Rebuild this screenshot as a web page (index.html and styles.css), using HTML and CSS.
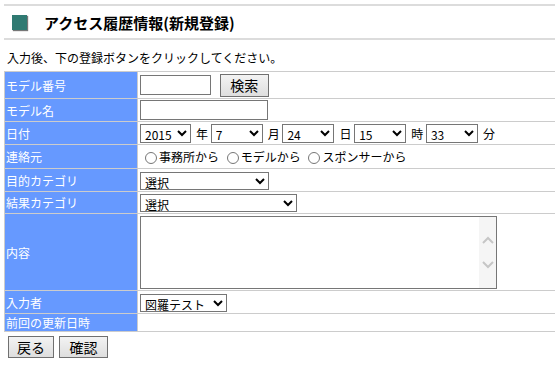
FILE: index.html
```html
<!DOCTYPE html>
<html lang="ja">
<head>
    <meta charset="UTF-8">
    <title>アクセス履歴情報(新規登録)</title>
    <link rel="stylesheet" href="styles.css">
</head>
<body>
    <div class="title-bar">
        <span class="title-mark"></span>
        <h1>アクセス履歴情報(新規登録)</h1>
    </div>
    <p class="guide">入力後、下の登録ボタンをクリックしてください。</p>

    <table class="form-table">
        <tr class="row-model-no">
            <th>モデル番号</th>
            <td>
                <input type="text" class="txt-code">
                <button type="button" class="btn btn-search">検索</button>
            </td>
        </tr>
        <tr class="row-model-name">
            <th>モデル名</th>
            <td><input type="text" class="txt-name"></td>
        </tr>
        <tr class="row-date">
            <th>日付</th>
            <td>
                <select class="sel-year"><option>2015</option></select><span class="unit">年</span>
                <select class="sel-num"><option>7</option></select><span class="unit">月</span>
                <select class="sel-num"><option>24</option></select><span class="unit">日</span>
                <select class="sel-num"><option>15</option></select><span class="unit">時</span>
                <select class="sel-num"><option>33</option></select><span class="unit">分</span>
            </td>
        </tr>
        <tr class="row-contact">
            <th>連絡元</th>
            <td>
                <label><input type="radio" name="from">事務所から</label>
                <label><input type="radio" name="from">モデルから</label>
                <label><input type="radio" name="from">スポンサーから</label>
            </td>
        </tr>
        <tr class="row-purpose">
            <th>目的カテゴリ</th>
            <td><select class="sel-purpose"><option>選択</option></select></td>
        </tr>
        <tr class="row-result">
            <th>結果カテゴリ</th>
            <td><select class="sel-result"><option>選択</option></select></td>
        </tr>
        <tr class="row-content">
            <th>内容</th>
            <td>
                <div class="memo">
                    <textarea></textarea>
                    <div class="memo-scroll">
                        <svg width="12" height="8" viewBox="0 0 12 8"><path d="M1 7 L6 2 L11 7" fill="none" stroke="#c6c6c6" stroke-width="2"/></svg>
                        <svg width="12" height="8" viewBox="0 0 12 8"><path d="M1 1 L6 6 L11 1" fill="none" stroke="#c6c6c6" stroke-width="2"/></svg>
                    </div>
                </div>
            </td>
        </tr>
        <tr class="row-user">
            <th>入力者</th>
            <td><select class="sel-user"><option>図羅テスト</option></select></td>
        </tr>
        <tr class="row-updated">
            <th>前回の更新日時</th>
            <td></td>
        </tr>
    </table>

    <div class="buttons">
        <button type="button" class="btn btn-back">戻る</button>
        <button type="button" class="btn btn-confirm">確認</button>
    </div>
</body>
</html>
```

FILE: styles.css
```css
body {
    margin: 4px 0 0 4px;
    font-family: "Noto Sans CJK JP", "Noto Sans", sans-serif;
    font-size: 12px;
    color: #000;
    background: #fff;
    overflow: hidden;
}

/* title */
.title-bar {
    display: flex;
    align-items: center;
    height: 32px;
    border-top: 2px solid #dcdcdc;
    border-bottom: 2px solid #dcdcdc;
    padding-left: 8px;
}

.title-mark {
    width: 15px;
    height: 15px;
    background-color: #2f7a72;
    box-shadow: 1px 1px 1px #777;
    margin-right: 17px;
}

h1 {
    margin: 0;
    font-size: 15px;
    font-weight: bold;
}

.guide {
    margin: 10px 0 5px 3px;
    line-height: 16px;
}

/* form table */
.form-table {
    width: calc(100% + 2px);
    border-spacing: 1px;
    background-color: #cccccc;
}

.form-table th {
    width: 131px;
    padding: 0 0 0 1px;
    background-color: #6699ff;
    color: #fff;
    font-weight: normal;
    text-align: left;
}

.form-table td {
    padding: 0 2px;
    background-color: #fff;
    white-space: nowrap;
}

.row-model-no td { height: 26px; }
.row-model-name td { height: 22px; }
.row-date td { height: 22px; }
.row-contact td { height: 23px; }
.row-purpose td { height: 22px; }
.row-result td { height: 21px; }
.row-content td { height: 76px; }
.row-user td { height: 22px; }
.row-updated td { height: 16px; }

input[type="text"] {
    box-sizing: border-box;
    height: 20px;
    margin: 0;
    padding: 1px 2px;
    border: 1px solid #767676;
    border-radius: 0;
    font: 13px "Noto Sans CJK JP", sans-serif;
    vertical-align: middle;
}

.txt-code { width: 71px; }
.txt-name { width: 128px; height: 19px; }

select {
    box-sizing: border-box;
    height: 19px;
    margin: 0;
    padding: 0;
    border: 1px solid #767676;
    border-radius: 0;
    background-color: #fff;
    font: 12px "Noto Sans CJK JP", sans-serif;
    line-height: 15px;
    vertical-align: middle;
}

.sel-year { width: 51px; }
.sel-num { width: 52px; }
.sel-purpose { width: 129px; height: 18px; }
.sel-result { width: 157px; height: 18px; }
.sel-user { width: 87px; height: 18px; }

.unit {
    display: inline-block;
    margin: 0 0 0 5px;
    vertical-align: middle;
}

.row-contact label {
    margin-right: 0;
}

.row-contact input[type="radio"] {
    width: 12px;
    height: 12px;
    margin: 0 2px 0 5px;
    vertical-align: -2px;
}

/* memo area */
.memo {
    display: flex;
    width: 357px;
    height: 73px;
    box-sizing: border-box;
    border: 1px solid #767676;
}

.memo textarea {
    flex: 1;
    margin: 0;
    padding: 2px;
    border: none;
    resize: none;
    outline: none;
    font: 13px "Noto Sans CJK JP", sans-serif;
}

.memo-scroll {
    width: 17px;
    background-color: #f5f5f5;
    display: flex;
    flex-direction: column;
    align-items: center;
    justify-content: center;
    gap: 17px;
}

/* buttons */
.btn {
    box-sizing: border-box;
    height: 22px;
    margin: 0;
    padding: 0;
    border: 1px solid #707070;
    border-radius: 0;
    background: linear-gradient(#f3f3f3, #dedede);
    font: 14px "Noto Sans CJK JP", sans-serif;
    line-height: 18px;
    color: #000;
}

.btn-search {
    width: 49px;
    height: 23px;
    margin-left: 6px;
    vertical-align: middle;
}

.buttons {
    display: flex;
    gap: 5px;
    margin: 4px 0 0 4px;
}

.btn-back { width: 46px; }
.btn-confirm { width: 49px; }
```
